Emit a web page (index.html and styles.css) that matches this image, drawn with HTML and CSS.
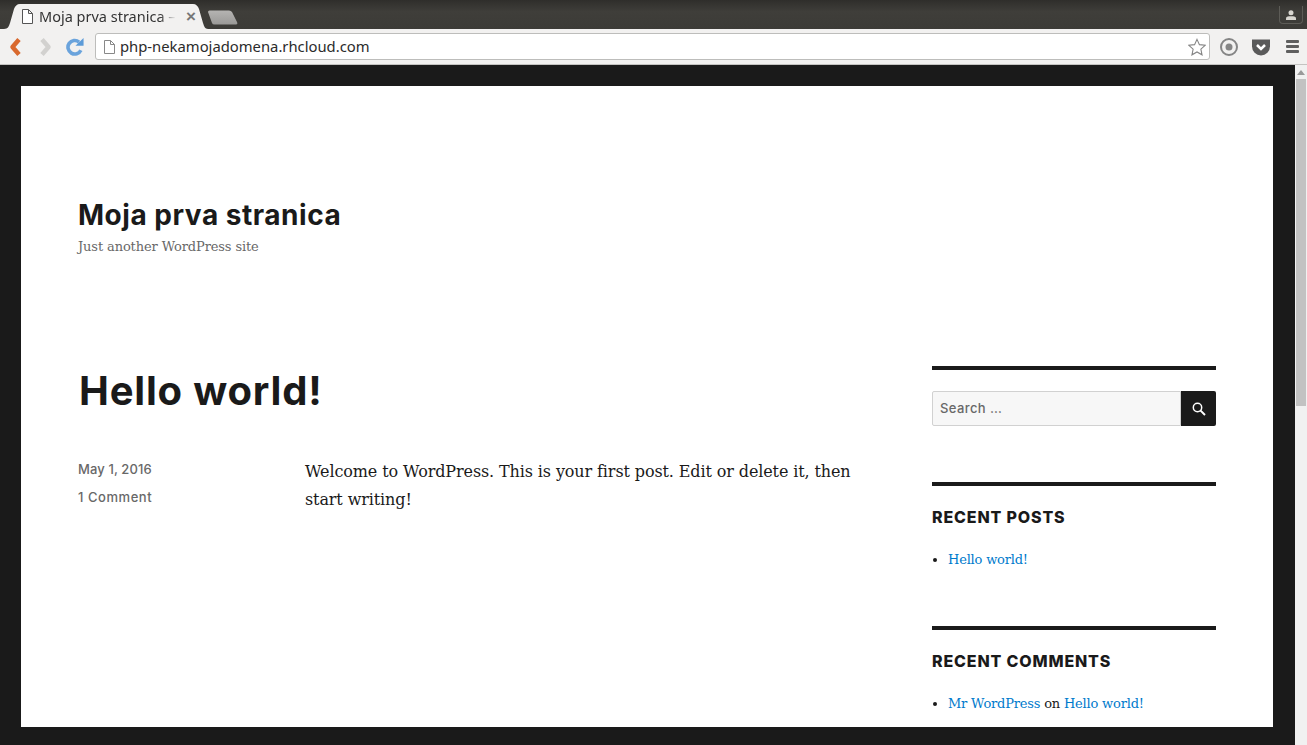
FILE: index.html
```html
<!DOCTYPE html>
<html lang="en">
<head>
<meta charset="utf-8">
<title>Moja prva stranica</title>
<link rel="stylesheet" href="styles.css">
</head>
<body>
<div class="browser">
  <div class="tabstrip">
    <div class="tab">
      <svg class="tab-file" width="12" height="15" viewBox="0 0 12 15"><path d="M1.500.5h6l4 4v10h-10z M7.500.5v4h4" fill="#fff" stroke="#555" stroke-width="1"/></svg>
      <span class="tab-title">Moja prva stranica –</span>
      <span class="tab-close">×</span>
    </div>
    <svg class="newtab" width="32" height="15" viewBox="0 0 32 15"><defs><linearGradient id="nt" x1="0" y1="0" x2="0" y2="1"><stop offset="0" stop-color="#b5b4b2"/><stop offset="1" stop-color="#9a9997"/></linearGradient></defs><path d="M1 2Q1 .5 2.500 .5H22Q24 .5 25 2L30 12Q31 14.500 29 14.500H7.500Q5.500 14.500 5 13Z" fill="url(#nt)"/></svg>
    <div class="profile">
      <svg width="12" height="10" viewBox="0 0 12 10"><circle cx="6" cy="2.800" r="2.500" fill="#d8d6d0"/><path d="M1 10V8.500Q1 6.500 4 6.300H8Q11 6.500 11 8.500V10Z" fill="#d8d6d0"/></svg>
    </div>
  </div>
  <div class="toolbar">
    <svg class="nav back" width="16" height="20" viewBox="0 0 16 20"><path d="M11 2.500L4.500 10l6.500 7.500" fill="none" stroke="#d9692e" stroke-width="4.500" stroke-linejoin="round"/></svg>
    <svg class="nav forward" width="16" height="20" viewBox="0 0 16 20"><path d="M5 2.500l6.500 7.500-6.500 7.500" fill="none" stroke="#d2d1cf" stroke-width="4.500" stroke-linejoin="round"/></svg>
    <svg class="nav reload" width="18" height="18" viewBox="0 0 20 20"><path d="M16.500 13.500A7.500 7.500 0 1 1 14.500 4.500" fill="none" stroke="#6aa3dc" stroke-width="4"/><path d="M10.500 8.500H19.500V0Z" fill="#5c9bd8"/></svg>
    <div class="omnibox">
      <svg width="11" height="14" viewBox="0 0 11 14"><path d="M.5.500h6l4 4v9H.5z M6.500.500v4h4" fill="#fff" stroke="#888"/></svg>
      <span class="url">php-nekamojadomena.rhcloud.com</span>
      <svg class="star" width="18" height="18" viewBox="0 0 20 19"><path d="M10 1l2.700 5.900 6.300.7-4.700 4.300 1.300 6.300L10 15l-5.600 3.200 1.300-6.300L1 7.600l6.300-.7z" fill="#fff" stroke="#858585" stroke-width="1.200"/></svg>
    </div>
    <svg class="ext" width="20" height="20" viewBox="0 0 20 20"><circle cx="10" cy="10" r="8" fill="none" stroke="#858585" stroke-width="2"/><circle cx="10" cy="10" r="3.500" fill="#858585"/></svg>
    <svg class="ext" width="20" height="18" viewBox="0 0 20 18"><path d="M1 1.500h18v7a9 9 0 0 1-18 0z" fill="#5a5a5a"/><path d="M6 7l4 4 4-4" fill="none" stroke="#fff" stroke-width="2.500"/></svg>
    <div class="menu"><span></span><span></span><span></span></div>
  </div>
</div>
<div class="viewport">
  <div class="canvas">
    <div class="site">
      <header class="masthead">
        <h1 class="site-title">Moja prva stranica</h1>
        <p class="tagline">Just another WordPress site</p>
      </header>
      <div class="columns">
        <main class="content">
          <h2 class="entry-title">Hello world!</h2>
          <div class="entry">
            <div class="meta">
              <p>May 1, 2016</p>
              <p class="comments">1 Comment</p>
            </div>
            <p class="entry-body">Welcome to WordPress. This is your first post. Edit or delete it, then start writing!</p>
          </div>
        </main>
        <aside class="sidebar">
          <section class="widget">
            <form class="search">
              <span class="search-field">Search …</span>
              <span class="search-btn">
                <svg width="14" height="14" viewBox="0 0 14 14"><circle cx="5.500" cy="5.500" r="4.200" fill="none" stroke="#fff" stroke-width="1.500"/><path d="M8.600 8.600L13 13" stroke="#fff" stroke-width="2"/></svg>
              </span>
            </form>
          </section>
          <section class="widget">
            <h3 class="widget-title">RECENT POSTS</h3>
            <ul class="links"><li><a>Hello world!</a></li></ul>
          </section>
          <section class="widget">
            <h3 class="widget-title">RECENT COMMENTS</h3>
            <ul class="links"><li><a>Mr WordPress</a> on <a>Hello world!</a></li></ul>
          </section>
        </aside>
      </div>
    </div>
  </div>
  <div class="scrollbar">
    <span class="arrow"></span>
    <span class="thumb"></span>
  </div>
</div>
</body>
</html>
```
FILE: styles.css
```css
* { box-sizing: border-box; }
html, body { margin: 0; padding: 0; height: 100%; overflow: hidden; }
body { width: 1307px; height: 745px; background: #1a1a1a; display: flex; flex-direction: column; }
p, h1, h2, h3, ul { margin: 0; padding: 0; }

.browser { height: 65px; flex: none; }
.tabstrip { height: 29px; background: linear-gradient(#2f2e2b, #3f3e3a 40%, #3c3b37); display: flex; align-items: flex-end; padding-left: 4px; position: relative; }
.tab { width: 204px; height: 25px; background: #f2f1f0; clip-path: path("M0 25C4 25 5 22 6 19L10 5C11 2 13 0 16 0H189C192 0 194 2 195 5L199 19C200 22 201 25 204 25Z"); display: flex; align-items: center; justify-content: space-between; padding: 0 12px 0 17px; }
.tab-file { flex: none; margin-right: 6px; }
.tab-title { font: 14.500px "Noto Sans", sans-serif; color: #333; flex: none; white-space: nowrap; margin-right: auto; padding-bottom: 2px; -webkit-mask-image: linear-gradient(to right, #000 88%, transparent 100%); mask-image: linear-gradient(to right, #000 88%, transparent 100%); }
.tab-close { font: bold 17px "Liberation Sans", sans-serif; color: #777; line-height: 14px; }
.newtab { margin: 0 0 4px -1px; }
.profile { position: absolute; right: 4px; top: 6px; width: 24px; height: 18px; border: 1px solid #5d5c57; border-top: 0; border-radius: 0 0 4px 4px; display: flex; align-items: center; justify-content: center; }

.toolbar { height: 36px; background: #f2f1f0; border-bottom: 1px solid #c4c3c1; display: flex; align-items: center; padding: 0 8px 0 8px; }
.nav { flex: none; }
.back { margin-right: 13px; }
.forward { margin-right: 13px; }
.reload { margin-right: 11px; }
.omnibox { width: 1115px; height: 27px; background: #fff; border: 1px solid #bdbdbb; border-radius: 3px; display: flex; align-items: center; padding: 0 3px 0 8px; gap: 5px; }
.url { font: 14.800px "Noto Sans", sans-serif; color: #2b2b2b; flex: 1; padding-bottom: 2px; }
.star { flex: none; }
.ext { margin-left: 9px; flex: none; }
.ext + .ext { margin-left: 12px; }
.menu { margin-left: 15px; width: 13px; display: flex; flex-direction: column; gap: 2px; }
.menu span { height: 3px; background: #5f5f5f; border-radius: 1px; }

.viewport { height: 680px; display: flex; flex: none; }
.canvas { width: 1295px; flex: none; padding: 21px 22px 18px 21px; overflow: hidden; }
.site { height: 641px; background: #fff; overflow: hidden; padding: 115px 57px 0 57px; }
.scrollbar { width: 12px; background: #f1f1f1; display: flex; flex-direction: column; align-items: center; }
.arrow { margin-top: 5px; width: 0; height: 0; border: 4px solid transparent; border-top: 0; border-bottom: 5px solid #9a9a9a; }
.thumb { width: 10px; height: 327px; margin-top: 4px; background: #c2c2c2; }

.masthead { height: 165px; }
.site-title { font: 700 28px/28px "Inter", sans-serif; color: #1a1a1a; letter-spacing: .52px; }
.tagline { font: 13px/19px "DejaVu Serif", serif; color: #686868; margin-top: 8px; letter-spacing: -.12px; }

.columns { display: flex; justify-content: space-between; }
.content { width: 795px; }
.entry-title { font: 700 40px/48px "Inter", sans-serif; color: #1a1a1a; margin-top: 1px; margin-left: 1px; letter-spacing: .8px; }
.entry { display: flex; margin-top: 42px; }
.meta { width: 227px; flex: none; font: 500 13px/16px "Inter", sans-serif; color: #686868; letter-spacing: .1px; }
.meta p { margin-top: 4px; margin-bottom: 12px; }
.meta .comments { letter-spacing: .55px; }
.entry-body { font: 16px/28px "DejaVu Serif", serif; color: #1a1a1a; width: 560px; letter-spacing: -.115px; padding-top: 1px; }

.sidebar { width: 284px; flex: none; }
.widget { border-top: 4px solid #1a1a1a; padding-top: 21px; margin-bottom: 56px; }
.search { display: flex; height: 35px; }
.search-field { flex: 1; background: #f7f7f7; border: 1px solid #d1d1d1; border-radius: 2px 0 0 2px; font: 500 13px/33px "Inter", sans-serif; color: #686868; padding-left: 7px; letter-spacing: .4px; }
.search-btn { width: 35px; background: #1a1a1a; border-radius: 0 2px 2px 0; display: flex; align-items: center; justify-content: center; }
.widget-title { font: 800 16px/20px "Inter", sans-serif; color: #1a1a1a; letter-spacing: .85px; margin-bottom: 21px; }
.links { font: 13px/24px "DejaVu Serif", serif; color: #1a1a1a; padding-left: 16px; letter-spacing: -.19px; margin-bottom: -2px; }
a { color: #007acc; }
```
